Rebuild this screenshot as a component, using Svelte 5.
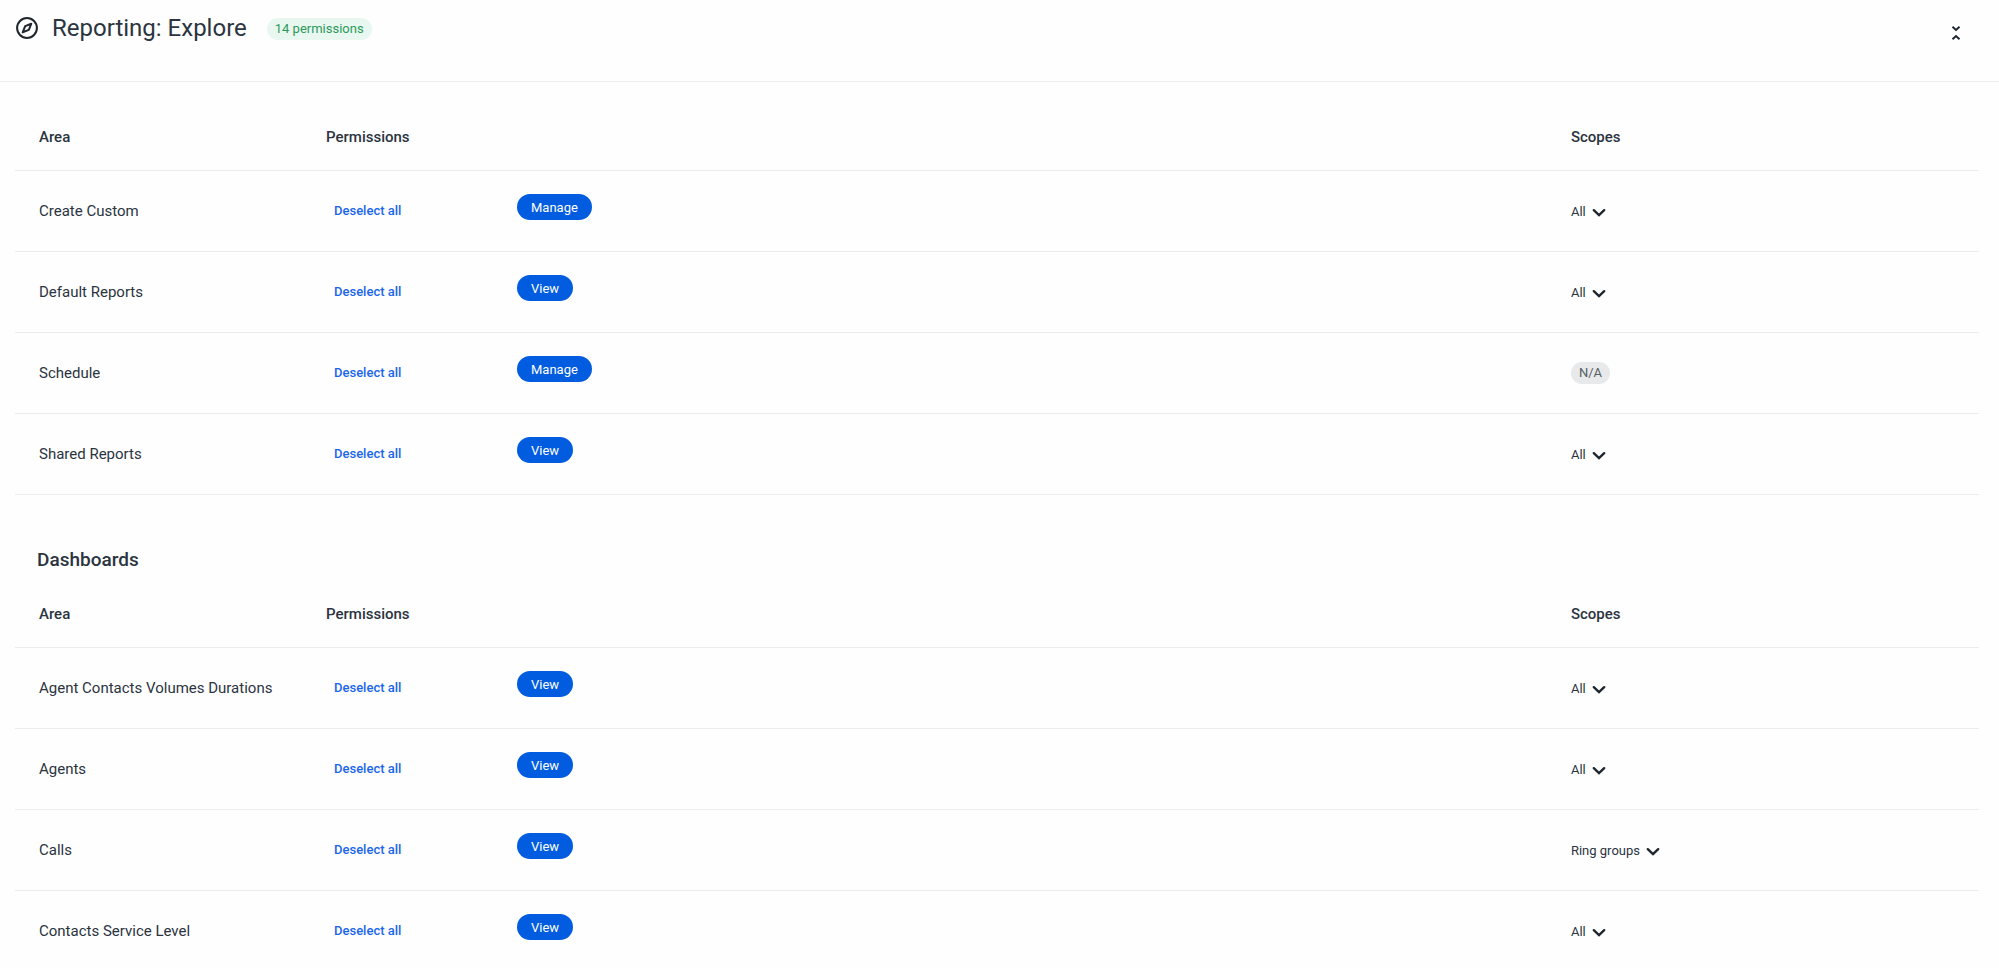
<script>
  const groups = [
    {
      id: 'general',
      title: '',
      rows: [
        { area: 'Create Custom', action: 'Manage', scope: 'All' },
        { area: 'Default Reports', action: 'View', scope: 'All' },
        { area: 'Schedule', action: 'Manage', scope: null },
        { area: 'Shared Reports', action: 'View', scope: 'All' }
      ]
    },
    {
      id: 'dashboards',
      title: 'Dashboards',
      rows: [
        { area: 'Agent Contacts Volumes Durations', action: 'View', scope: 'All' },
        { area: 'Agents', action: 'View', scope: 'All' },
        { area: 'Calls', action: 'View', scope: 'Ring groups' },
        { area: 'Contacts Service Level', action: 'View', scope: 'All' }
      ]
    }
  ];
</script>

<header class="top">
  <svg class="compass" viewBox="0 0 24 24" aria-hidden="true">
    <circle cx="12" cy="12" r="10.8" />
    <path d="M16.7 7.3 14 14 7.3 16.7 10 10Z" />
  </svg>
  <h1>Reporting: Explore</h1>
  <span class="badge green">14 permissions</span>
  <button class="collapse" aria-label="Collapse section">
    <svg viewBox="0 0 10 16" aria-hidden="true">
      <path d="M1.5 1.8 5 5 8.5 1.8M1.5 14.2 5 11 8.5 14.2" />
    </svg>
  </button>
</header>

<main>
  {#each groups as group (group.id)}
    <section>
      {#if group.title}<h2>{group.title}</h2>{/if}
      <table>
        <colgroup>
          <col class="c-area" /><col class="c-select" /><col /><col class="c-scope" />
        </colgroup>
        <thead>
          <tr>
            <th scope="col">Area</th>
            <th scope="col" colspan="2">Permissions</th>
            <th scope="col">Scopes</th>
          </tr>
        </thead>
        <tbody>
          {#each group.rows as row}
            <tr>
              <td>{row.area}</td>
              <td><button class="deselect">Deselect all</button></td>
              <td class="chips"><button class="chip" aria-pressed="true">{row.action}</button></td>
              <td>
                {#if row.scope}
                  <span class="picker">
                    <select aria-label={row.area + ' scope'}>
                      <option>{row.scope}</option>
                    </select>
                    <svg viewBox="0 0 14 10" aria-hidden="true"><path d="M1.8 2.2 7 7.2 12.2 2.2" /></svg>
                  </span>
                {:else}
                  <span class="badge grey">N/A</span>
                {/if}
              </td>
            </tr>
          {/each}
        </tbody>
      </table>
    </section>
  {/each}
</main>

<style>
  :global(body) {
    margin: 0;
    background: #fefefe;
    color: #2b343f;
    font-family: Roboto, Arial, sans-serif;
    font-size: 15px;
    line-height: 20px;
  }
  button, select {
    border: 0;
    background: none;
    padding: 0;
    margin: 0;
    font: inherit;
    color: inherit;
    cursor: pointer;
  }
  .top {
    display: flex;
    align-items: flex-start;
    box-sizing: border-box;
    height: 82px;
    padding: 12px 35px 0 16px;
    border-bottom: 1px solid #ececed;
  }
  .compass {
    width: 22px;
    height: 22px;
    margin: 5px 14px 0 0;
    fill: none;
    stroke: #20262e;
    stroke-width: 2.2;
    stroke-linejoin: round;
    overflow: visible;
  }
  h1 {
    margin: 0 20px 0 0;
    font-size: 24px;
    line-height: 32px;
    font-weight: 400;
  }
  .badge {
    display: inline-block;
    border-radius: 11px;
    padding: 0 8px;
    font-size: 13px;
    line-height: 22px;
  }
  .green { margin-top: 6px; background: #e9f7f1; color: #2a9a58; }
  .grey { background: #e7e9ea; color: #555e66; }
  .collapse {
    display: grid;
    place-items: center;
    width: 16px;
    height: 20px;
    margin: 11px 0 0 auto;
  }
  .collapse svg {
    width: 10px;
    height: 16px;
    fill: none;
    stroke: #20262e;
    stroke-width: 2;
  }
  main { padding: 22px 20px 0 15px; }
  section + section { padding-top: 51px; }
  h2 {
    margin: 0;
    padding-left: 22px;
    font-size: 19px;
    line-height: 28px;
    font-weight: 500;
  }
  section + section table { margin-top: 7px; }
  table {
    width: 100%;
    table-layout: fixed;
    border-collapse: separate;
    border-spacing: 0;
  }
  .c-area { width: 287px; }
  .c-select { width: 191px; }
  .c-scope { width: 22%; }
  th, td {
    box-sizing: border-box;
    padding: 0 0 0 24px;
    border-bottom: 1px solid #ececed;
    text-align: left;
    vertical-align: middle;
    white-space: nowrap;
  }
  th { height: 67px; font-weight: 500; }
  td { height: 81px; }
  section + section tbody tr:last-child td { border-bottom-color: transparent; }
  .deselect {
    padding: 4px 8px;
    color: #1b66ea;
    font-size: 13px;
    font-weight: 500;
  }
  .chips { padding-bottom: 8px; }
  .chip {
    border-radius: 13px;
    padding: 2px 14px 0;
    background: #015ce0;
    color: #fff;
    font-size: 13px;
    line-height: 24px;
  }
  .picker {
    display: inline-flex;
    position: relative;
    align-items: center;
    font-size: 13px;
  }
  select {
    appearance: none;
    field-sizing: content;
    padding-right: 20px;
  }
  .picker svg {
    position: absolute;
    right: 0;
    top: 6px;
    width: 14px;
    height: 10px;
    fill: none;
    stroke: #20262e;
    stroke-width: 2.4;
    stroke-linecap: round;
    pointer-events: none;
  }
</style>
